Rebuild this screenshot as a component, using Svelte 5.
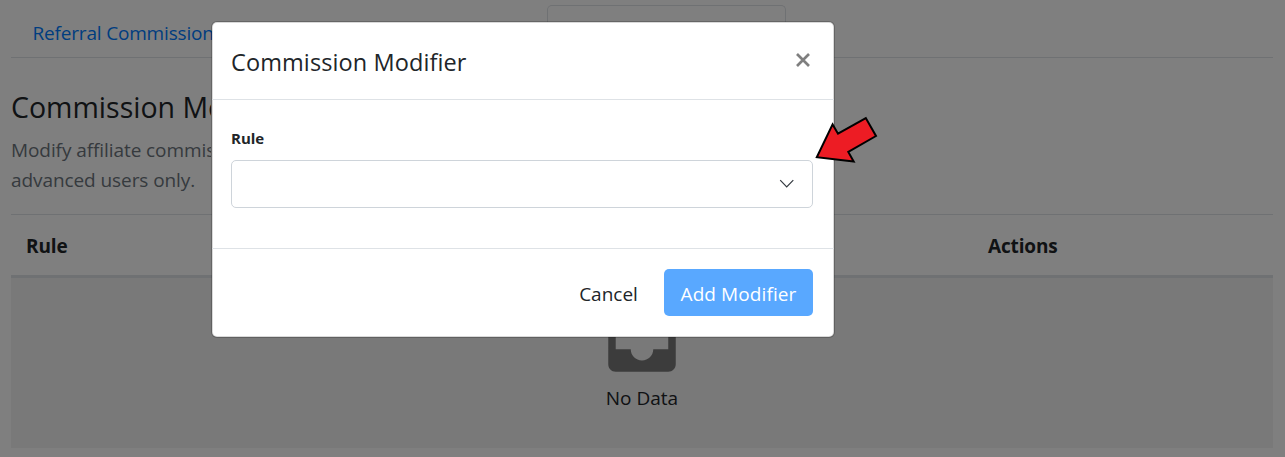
<script>
  let rule = $state('');
  const columns = ['Rule', 'Actions'];
</script>

<div class="screen">
  <main class="page">
    <nav class="tabs">
      <a class="tab" href="#referral">Referral Commission</a>
      <div class="tab-active"></div>
    </nav>
    <h2>Commission Modifiers</h2>
    <p class="muted">
      <span class="line">Modify affiliate commis</span>
      <span class="line">advanced users only.</span>
    </p>
    <div class="table">
      <div class="thead">
        {#each columns as column}
          <div class="th {column.toLowerCase()}">{column}</div>
        {/each}
      </div>
      <div class="empty">
        <svg class="inbox" viewBox="0 0 24 24" width="90" height="90">
          <path d="M19 3H4.99c-1.11 0-1.98.89-1.98 2L3 19c0 1.1.88 2 1.99 2H19c1.1 0 2-.9 2-2V5c0-1.11-.9-2-2-2zm0 12h-4c0 1.66-1.35 3-3 3s-3-1.34-3-3H4.99V5H19v10z" />
        </svg>
        <div class="nodata">No Data</div>
      </div>
    </div>
  </main>

  <div class="backdrop">
    <section class="modal">
      <header>
        <h5>Commission Modifier</h5>
        <button class="close" aria-label="Close">
          <svg width="14" height="14" viewBox="0 0 14 14"><path d="M1 1L13 13M13 1L1 13" /></svg>
        </button>
      </header>
      <div class="body">
        <div class="label">Rule</div>
        <div class="select">
          <span>{rule}</span>
          <svg width="16" height="10" viewBox="0 0 16 10"><path d="M1.2 1.2L7.7 7.8L14.3 1.2" /></svg>
        </div>
      </div>
      <footer>
        <button class="cancel">Cancel</button>
        <button class="add">Add Modifier</button>
      </footer>
    </section>
  </div>

  <svg class="arrow" width="66" height="50" viewBox="0 0 66 50">
    <path d="M6.8 47.2L22.6 14.4L28 23.7L55.8 8.1L66 26L38.3 41.9L43.7 51.6Z" />
  </svg>
</div>

<style>
  :global(body) {
    margin: 0;
    overflow: hidden;
    background: #fff;
  }
  .screen, .screen * { box-sizing: border-box; }
  .screen {
    position: relative;
    width: 1285px;
    height: 457px;
    overflow: hidden;
    font-family: "Open Sans", "Noto Sans", sans-serif;
    font-size: 19px;
    color: #212529;
    white-space: nowrap;
  }
  .page {
    padding: 0 12px 0 11px;
    height: 457px;
  }
  .tabs {
    display: flex;
    height: 58px;
    padding-top: 5px;
    border-bottom: 1px solid #dee2e6;
  }
  .tab {
    width: 536px;
    padding-left: 21.5px;
    line-height: 56px;
    color: #007bff;
    text-decoration: none;
    letter-spacing: -0.18px;
  }
  .tab-active {
    width: 239px;
    height: 53px;
    border: 1px solid #dee2e6;
    border-bottom: 0;
    border-radius: 5px 5px 0 0;
  }
  h2 {
    width: 200px;
    overflow: hidden;
    margin: 31px 0 0;
    font-size: 28.5px;
    line-height: 36px;
    font-weight: 400;
    letter-spacing: 0;
  }
  .muted {
    width: 200px;
    overflow: hidden;
    margin: 10px 0 19px;
    color: #6c757d;
    line-height: 30px;
    letter-spacing: -0.08px;
  }
  .line { display: block; }
  .table { border-top: 1px solid #dee2e6; }
  .thead {
    display: flex;
    height: 63px;
    border-bottom: 3px solid #dee2e6;
    font-weight: 700;
    line-height: 62px;
  }
  .th { padding-left: 15px; letter-spacing: -0.15px; }
  .rule { width: 962px; }
  .actions { flex: 1; }
  .empty {
    display: flex;
    flex-direction: column;
    align-items: center;
    height: 170px;
    padding-top: 15px;
    background: #f2f2f2;
  }
  .inbox { fill: #797979; }
  .nodata { line-height: 31px; }
  .backdrop {
    position: absolute;
    inset: 0;
    padding: 21px 0 0 211px;
    background: rgba(0, 0, 0, 0.5);
  }
  .modal {
    width: 624px;
    height: 317px;
    background: #fff;
    background-clip: padding-box;
    border: 1px solid rgba(0, 0, 0, 0.2);
    border-radius: 6px;
    box-shadow: inset 0 0 0 1px rgba(0, 0, 0, 0.15);
  }
  header {
    display: flex;
    justify-content: space-between;
    height: 78px;
    padding: 0 24px 0 19px;
    border-bottom: 1px solid #dee2e6;
  }
  h5 {
    margin: 0;
    font-size: 23.5px;
    line-height: 81px;
    font-weight: 400;
    letter-spacing: 0.1px;
  }
  button {
    border: 0;
    padding: 0;
    background: none;
    font: inherit;
    color: inherit;
  }
  .close { display: flex; align-items: center; height: 76px; }
  .close path { fill: none; stroke: #7f7f7f; stroke-width: 2.7; }
  .body {
    height: 148px;
    padding: 24px 21px 0 19px;
  }
  .label {
    height: 36px;
    font-size: 15px;
    line-height: 29px;
    font-weight: 700;
  }
  .select {
    display: flex;
    align-items: center;
    justify-content: space-between;
    height: 48px;
    padding: 0 17px 0 15px;
    border: 1px solid #ced4da;
    border-radius: 5px;
  }
  .select path { fill: none; stroke: #343a40; stroke-width: 1.2; }
  footer {
    display: flex;
    justify-content: flex-end;
    height: 88px;
    padding: 20px 21px 0 0;
    border-top: 1px solid #dee2e6;
  }
  footer button { height: 47px; line-height: 50px; }
  .cancel { width: 111px; }
  .add {
    width: 149px;
    border-radius: 5px;
    background: #59a8ff;
    color: #fff;
    letter-spacing: 0.1px;
  }
  .arrow {
    position: absolute;
    left: 810px;
    top: 110px;
    overflow: visible;
  }
  .arrow path { fill: #ed1c24; stroke: #000; stroke-width: 2; }
</style>
